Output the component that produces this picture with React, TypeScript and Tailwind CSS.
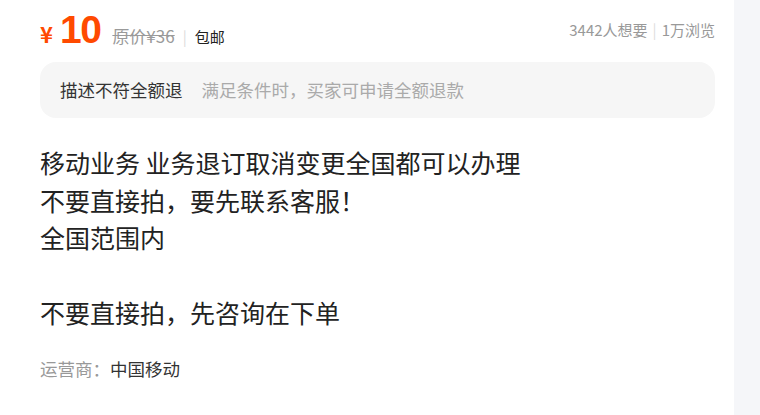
import React from 'react';

const font = { fontFamily: '"Noto Sans CJK SC", "Noto Sans", sans-serif' };

const lines = ['移动业务 业务退订取消变更全国都可以办理', '不要直接拍，要先联系客服！', '全国范围内', '', '不要直接拍，先咨询在下单'];

export default function App() {
  return (
    <div className="flex h-[415px] w-[760px] overflow-hidden bg-[#f5f6f9]" style={font}>
      <div className="w-[734px] shrink-0 bg-white pl-10 pr-[19px]">
        {/* price row */}
        <div className="flex h-[62px] items-center justify-between pb-[2px]">
          <div className="flex items-baseline">
            <span className="mr-[7px] text-[22px] font-bold text-[#ff4a00]">¥</span>
            <span className="text-[39px] font-bold leading-none tracking-[-1.5px] text-[#ff4a00]" style={{ fontFamily: '"Liberation Sans", Arial, sans-serif' }}>10</span>
            <span className="ml-[12px] text-[17px] text-[#9a9a9a] line-through">原价¥36</span>
            <span className="mx-[8px] text-[15px] text-[#dcdcdc]">|</span>
            <span className="text-[15px] text-[#222]">包邮</span>
          </div>
          <div className="flex items-center text-[15px] text-[#999]">
            <span>3442人想要</span>
            <span className="mx-[5px] text-[#ddd]">|</span>
            <span>1万浏览</span>
          </div>
        </div>

        {/* guarantee */}
        <div className="flex h-[56px] items-center rounded-[16px] bg-[#f6f6f6] px-5 text-[17.5px]">
          <span className="text-[#333]">描述不符全额退</span>
          <span className="ml-[19px] text-[#aaa]">满足条件时，买家可申请全额退款</span>
        </div>

        {/* description */}
        <div className="mt-[26px] text-[25px] leading-[37.5px] text-[#222]">
          {lines.map((l, i) => (
            <div key={i} className="h-[37.5px]">{l}</div>
          ))}
        </div>

        <div className="mt-[24px] flex text-[17.5px]">
          <span className="text-[#999]">运营商：</span>
          <span className="text-[#333]">中国移动</span>
        </div>
      </div>
    </div>
  );
}
